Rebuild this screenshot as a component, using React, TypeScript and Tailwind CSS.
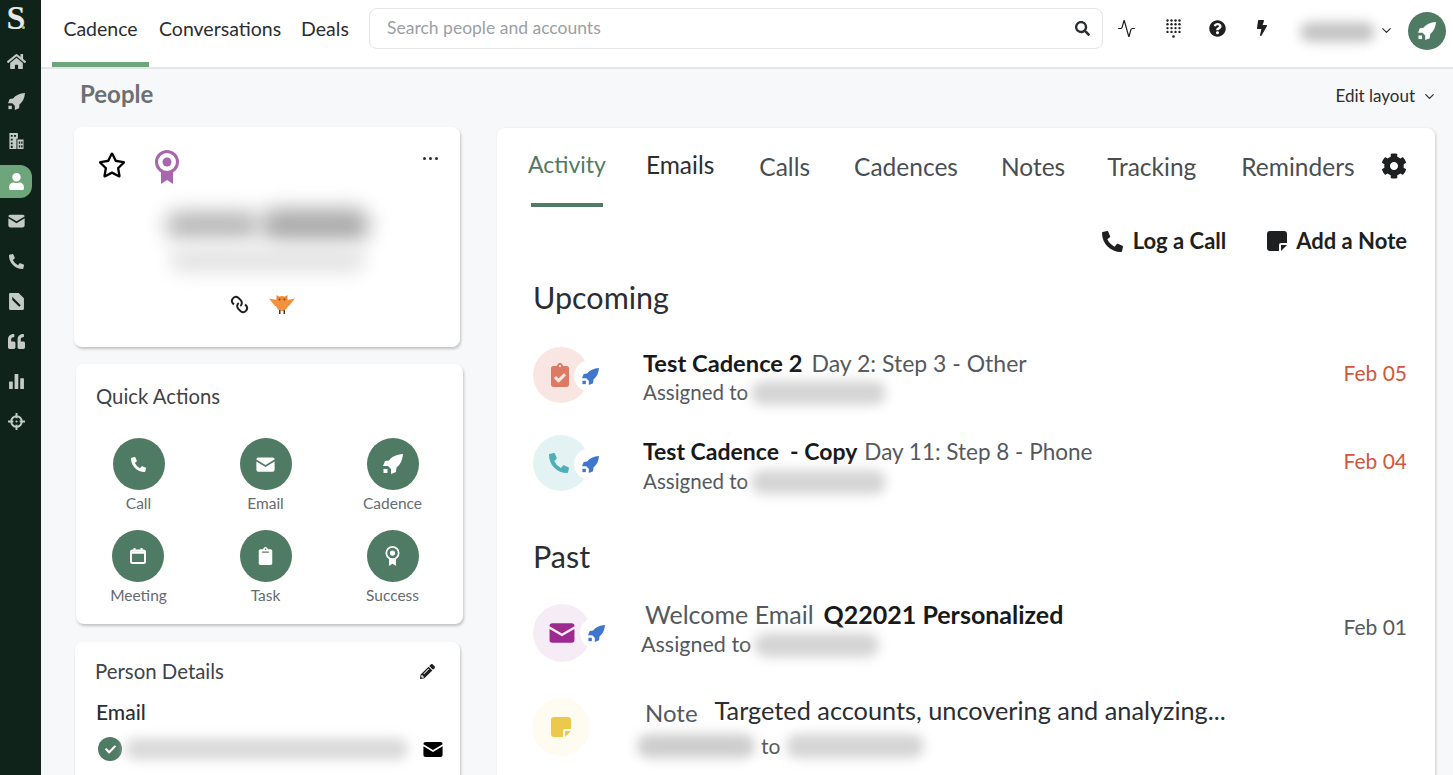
import { ReactNode } from 'react';
import { Activity, ChevronDown } from 'lucide-react';
import {
  FaBolt,
  FaCheck,
  FaClipboard,
  FaClipboardCheck,
  FaCog,
  FaHome,
  FaPencilAlt,
  FaPhoneAlt,
  FaQuestionCircle,
  FaQuoteLeft,
  FaRegStar,
  FaSearch,
  FaUser,
} from 'react-icons/fa';

function Blur({ className }: { className: string }) {
  return <div className={`rounded-full blur-[6px] ${className}`} />;
}

function Rocket({ className }: { className?: string }) {
  return (
    <svg viewBox="0 0 20 20" className={className} fill="currentColor">
      <path d="M20 0C13.500.5 9 2.500 6 6.500L2 7 0 12h5l3 3v5l5-2 .5-4.500C17.500 10.500 19.500 6 20 0z" />
      <path d="M.5 15h4v4h-4z" />
    </svg>
  );
}

function Mail({ className }: { className?: string }) {
  return (
    <svg viewBox="0 0 24 18" className={className} fill="currentColor">
      <path d="M3 0h18a2.500 2.500 0 0 1 2.500 2.500v.3L12 9.500.5 2.800v-.3A2.500 2.500 0 0 1 3 0z" />
      <path d="M.5 5.200L12 12 23.500 5.200V15.500A2.500 2.500 0 0 1 21 18H3a2.500 2.500 0 0 1-2.500-2.500z" />
    </svg>
  );
}

function Building({ className }: { className?: string }) {
  return (
    <svg viewBox="0 0 16 17" className={className} fill="currentColor">
      <path d="M1 0h9v6H8.500v11H1zM2.500 2v2h2V2zm3.500 0v2h2V2zM2.500 6v2h2V6zm0 4v2h2v-2zm0 3.500V16h2v-2.500z" fillRule="evenodd" />
      <path d="M9.500 7H16v10H9.500zM11 9v2.500h1.500V9zm2.500 0v2.500H15V9zM11 13v2.500h1.500V13zm2.500 0v2.500H15V13z" fillRule="evenodd" />
    </svg>
  );
}

function Target({ className }: { className?: string }) {
  return (
    <svg viewBox="0 0 16 16" className={className} fill="none" stroke="currentColor">
      <circle cx="8" cy="8" r="5" strokeWidth="1.800" />
      <path d="M8 0v5M8 11v5M0 8h5M11 8h5" strokeWidth="1.800" />
      <circle cx="8" cy="8" r="1" fill="currentColor" stroke="none" />
    </svg>
  );
}

function Bars({ className }: { className?: string }) {
  return (
    <svg viewBox="0 0 16 16" className={className} fill="currentColor">
      <rect x="1" y="8" width="3.500" height="7" rx="0.500" />
      <rect x="6.200" y="1" width="3.500" height="14" rx="0.500" />
      <rect x="11.500" y="5" width="3.500" height="10" rx="0.500" />
    </svg>
  );
}

function Calendar({ className }: { className?: string }) {
  return (
    <svg viewBox="0 0 16 16" className={className} fill="none" stroke="currentColor">
      <rect x="1" y="2.500" width="14" height="12.500" rx="1.500" strokeWidth="2" />
      <path d="M1 4.500h14" strokeWidth="2.500" />
      <path d="M4.500 0v3M11.500 0v3" strokeWidth="2" />
    </svg>
  );
}

function NoteDoc({ className }: { className?: string }) {
  return (
    <svg viewBox="0 0 14 16" className={className} fill="currentColor">
      <path d="M1 0h8l5 5v9.500a1.500 1.500 0 0 1-1.500 1.500h-11A1.500 1.500 0 0 1 0 14.500V1a1 1 0 0 1 1-1zm2 3.500v3L9.500 13l1.500-1.500z" fillRule="evenodd" />
    </svg>
  );
}

function StickyNote({ className }: { className?: string }) {
  return (
    <svg viewBox="0 0 20 20" className={className} fill="currentColor">
      <path d="M3 0h14a3 3 0 0 1 3 3v9h-6a2 2 0 0 0-2 2v6H3a3 3 0 0 1-3-3V3a3 3 0 0 1 3-3z" />
      <path d="M14 14h6l-6 6z" />
    </svg>
  );
}

function Ribbon({ className, hole }: { className?: string; hole: string }) {
  return (
    <svg viewBox="0 0 24 34" className={className}>
      <path d="M6 16v18l6-4 6 4V16z" fill="currentColor" />
      <circle cx="12" cy="12" r="10.500" fill={hole} stroke="currentColor" strokeWidth="3" />
      <circle cx="12" cy="12" r="4.500" fill="currentColor" />
    </svg>
  );
}

function Dialpad({ className }: { className?: string }) {
  const dots = [];
  for (let r = 0; r < 4; r++) {
    for (let c = 0; c < 4; c++) {
      dots.push(<circle key={`${r}-${c}`} cx={1.500 + c * 4} cy={1.500 + r * 3.800} r="1.200" />);
    }
  }
  return (
    <svg viewBox="0 0 15 19" className={className} fill="currentColor">
      {dots}
      <circle cx="7.500" cy="17.500" r="1.300" />
    </svg>
  );
}

function Owl() {
  return (
    <svg viewBox="0 0 26 20" className="h-5 w-[26px]">
      <path d="M0 4.500l8 1.500h10l8-1.500-6 7.500h-14z" fill="#f4913c" />
      <ellipse cx="13" cy="9.500" rx="6.500" ry="7.500" fill="#f4913c" />
      <path d="M7.500 1l3 2h5l3-2v5h-11z" fill="#ee8a33" />
      <circle cx="10.500" cy="5.500" r="1" fill="#7a4a1c" />
      <circle cx="15.500" cy="5.500" r="1" fill="#7a4a1c" />
      <path d="M10 16h1.500v4H10zM14.500 16H16v4h-1.500z" fill="#4a3a2a" />
    </svg>
  );
}

function NavIcon({ children, active }: { children: ReactNode; active?: boolean }) {
  return (
    <div className="flex h-10 w-full items-center">
      <div
        className={`flex h-[33px] w-[32px] items-center justify-center rounded-r-xl ${
          active ? 'bg-[#6fa57b] text-white' : 'text-[#c4cbc7]'
        }`}
      >
        {children}
      </div>
    </div>
  );
}

function QuickAction({ icon, label }: { icon: ReactNode; label: string }) {
  return (
    <div className="flex flex-col items-center">
      <div className="flex h-[52px] w-[52px] items-center justify-center rounded-full bg-[#4f7a64] text-white">
        {icon}
      </div>
      <div className="mt-[3px] text-[15.500px] leading-[20px] text-[#666b70]">{label}</div>
    </div>
  );
}

function TimelineIcon({
  className,
  children,
  rocket,
}: {
  className: string;
  children: ReactNode;
  rocket?: string;
}) {
  return (
    <div className={`relative flex shrink-0 items-center justify-center rounded-full ${className}`}>
      {children}
      {rocket && (
        <div className={`absolute top-[13px] flex h-[32px] w-[32px] items-center justify-center rounded-full bg-white text-[#3f74cf] ${rocket}`}>
          <Rocket className="h-[17px] w-[17px]" />
        </div>
      )}
    </div>
  );
}

const tabs: [string, string][] = [
  ['Emails', 'ml-[40px] mt-[22px] text-[#2b2e31]'],
  ['Calls', 'ml-[45px] mt-[24px]'],
  ['Cadences', 'ml-[44px] mt-[24px]'],
  ['Notes', 'ml-[43px] mt-[24px]'],
  ['Tracking', 'ml-[42px] mt-[24px]'],
  ['Reminders', 'ml-[45px] mt-[24px]'],
];

export default function App() {
  return (
    <div className="flex h-[775px] w-[1453px] overflow-hidden bg-[#f7f8fa] font-['Lato','Liberation_Sans',sans-serif] text-[#2b2e31]">
      <aside className="flex w-[41px] shrink-0 flex-col bg-[#10231a]">
        <div className="relative h-[41px] w-[32px] text-center font-['Liberation_Serif',serif] text-[34px] font-bold leading-[36px] text-[#e6e9e7]">
          S
          <span className="absolute left-[22px] top-[26px] h-[3px] w-[3px] rounded-full bg-[#9ccb5a]" />
        </div>
        <NavIcon><FaHome className="h-[19px] w-[19px]" /></NavIcon>
        <NavIcon><Rocket className="h-[17px] w-[17px]" /></NavIcon>
        <NavIcon><Building className="h-[16px] w-[16px]" /></NavIcon>
        <NavIcon active><FaUser className="h-[17px] w-[17px]" /></NavIcon>
        <NavIcon><Mail className="h-[14px] w-[17px]" /></NavIcon>
        <NavIcon><FaPhoneAlt className="h-[15px] w-[15px]" /></NavIcon>
        <NavIcon><NoteDoc className="h-[17px] w-[15px]" /></NavIcon>
        <NavIcon><FaQuoteLeft className="h-[17px] w-[17px]" /></NavIcon>
        <NavIcon><Bars className="h-[17px] w-[17px]" /></NavIcon>
        <NavIcon><Target className="h-[17px] w-[17px]" /></NavIcon>
      </aside>

      <div className="flex min-w-0 flex-1 flex-col">
        <header className="flex h-[69px] shrink-0 border-b-2 border-[#e3e6e9] bg-white">
          <nav className="flex text-[19.500px] leading-[58px] text-[#2b2e31]">
            <div className="ml-[11px] h-[67px] w-[97px] border-b-[5px] border-[#6fa57b] text-center">Cadence</div>
            <div className="ml-[10px]">Conversations</div>
            <div className="ml-[20px] w-[49px]">Deals</div>
          </nav>
          <div className="ml-[19px] mt-[8px] flex h-[41px] w-[734px] items-center rounded-lg border border-[#e3e5e8] pl-[17px] pr-[12px] text-[17.500px] text-[#9aa0a5]">
            <span className="flex-1">Search people and accounts</span>
            <FaSearch className="h-[15px] w-[15px] text-[#2b2e31]" />
          </div>
          <div className="flex items-start text-[#1d1f21]">
            <Activity className="ml-[14px] mt-[19px] h-[19px] w-[19px]" strokeWidth={1.500} />
            <Dialpad className="ml-[30px] mt-[19px] h-[19px] w-[15px]" />
            <FaQuestionCircle className="ml-[28px] mt-[20px] h-[17px] w-[17px]" />
            <FaBolt className="ml-[29px] mt-[20px] h-[16px] w-[14px]" />
            <Blur className="ml-[31px] mt-[22px] h-[20px] w-[75px] bg-[#c4c4c4]" />
            <ChevronDown className="ml-[4px] mt-[23px] h-[15px] w-[15px] text-[#333]" />
            <div className="ml-[14px] mt-[12px] flex h-[38px] w-[38px] items-center justify-center rounded-full bg-[#4f7a64] text-white">
              <Rocket className="h-[18px] w-[18px]" />
            </div>
          </div>
        </header>

        <div className="flex h-[58px] shrink-0 items-start justify-between">
          <h1 className="ml-[39px] mt-[10px] text-[24px] font-bold leading-[30px] text-[#6b7074]">People</h1>
          <div className="mr-[16px] mt-[17px] flex items-center text-[17px] leading-[20px] text-[#2b2e31]">
            Edit layout
            <ChevronDown className="ml-[7px] h-[15px] w-[15px] text-[#333]" />
          </div>
        </div>

        <div className="flex min-h-0 flex-1 items-start">
          <div className="ml-[33px] flex w-[390px] flex-col">
            <section className="h-[220px] w-[386px] rounded-lg bg-white shadow-[1px_2px_3px_rgba(0,0,0,0.22)]">
              <div className="flex items-start pl-[24px] pt-[24px]">
                <FaRegStar className="h-[28px] w-[28px] text-black" />
                <Ribbon className="ml-[29px] mt-[-1px] h-[34px] w-[24px] text-[#a866ad]" hole="#ffffff" />
                <div className="ml-auto mr-[22px] mt-[6px] flex gap-[3px]">
                  <span className="h-[3px] w-[3px] rounded-full bg-[#2b2e31]" />
                  <span className="h-[3px] w-[3px] rounded-full bg-[#2b2e31]" />
                  <span className="h-[3px] w-[3px] rounded-full bg-[#2b2e31]" />
                </div>
              </div>
              <div className="mt-[20px] flex flex-col items-center">
                <div className="flex h-[42px] w-[205px] items-center">
                  <div className="h-[28px] w-[95px] rounded-full bg-[#b8b8b8] blur-[10px]" />
                  <div className="h-[34px] w-[110px] rounded-full bg-[#acacac] blur-[10px]" />
                </div>
                <div className="mt-[1px] h-[26px] w-[195px] rounded-full bg-[#e4e4e4] blur-[9px]" />
              </div>
              <div className="mt-[21px] flex items-center justify-center gap-[20px] pr-[10px]">
                <svg viewBox="0 0 24 24" className="h-[19px] w-[19px] text-[#1d1f21]" fill="none" stroke="currentColor" strokeWidth="2.500">
                  <path d="M10 13a5 5 0 0 0 7.500.500l3-3a5 5 0 0 0-7-7l-1.500 1.500" transform="rotate(90 12 12)" />
                  <path d="M14 11a5 5 0 0 0-7.500-.500l-3 3a5 5 0 0 0 7 7l1.500-1.500" transform="rotate(90 12 12)" />
                </svg>
                <Owl />
              </div>
            </section>

            <section className="ml-[2px] mt-[17px] h-[260px] w-[387px] rounded-lg bg-white pt-[20px] shadow-[1px_2px_3px_rgba(0,0,0,0.22)]">
              <h2 className="ml-[20px] text-[20.300px] leading-[24px] text-[#3f4347]">Quick Actions</h2>
              <div className="ml-[-1px] mt-[30px] grid grid-cols-[127px_127px_127px] justify-items-center gap-y-[17px]">
                <QuickAction label="Call" icon={<FaPhoneAlt className="h-[15px] w-[15px]" />} />
                <QuickAction label="Email" icon={<Mail className="h-[15px] w-[19px]" />} />
                <QuickAction label="Cadence" icon={<Rocket className="h-[20px] w-[20px]" />} />
                <QuickAction label="Meeting" icon={<Calendar className="h-[16px] w-[16px]" />} />
                <QuickAction label="Task" icon={<FaClipboard className="h-[18px] w-[15px]" />} />
                <QuickAction label="Success" icon={<Ribbon className="h-[20px] w-[15px] text-white" hole="#4f7a64" />} />
              </div>
            </section>

            <section className="ml-[1px] mt-[18px] h-[200px] w-[385px] rounded-lg bg-white pl-[20px] pr-[18px] pt-[17px] shadow-[1px_2px_3px_rgba(0,0,0,0.22)]">
              <div className="flex items-center justify-between">
                <h2 className="text-[20.400px] leading-[24px] text-[#3f4347]">Person Details</h2>
                <FaPencilAlt className="mr-[7px] h-[15px] w-[15px] text-[#1d1f21]" />
              </div>
              <div className="ml-[1px] mt-[17px] text-[21px] font-medium leading-[24px] text-[#2b2e31]">Email</div>
              <div className="mt-[13px] flex items-center">
                <div className="ml-[3px] flex h-[24px] w-[24px] items-center justify-center rounded-full bg-[#4f7a64] text-white">
                  <FaCheck className="h-[11px] w-[11px]" />
                </div>
                <Blur className="ml-[3px] h-[22px] w-[283px] bg-[#dadada]" />
                <Mail className="ml-auto mr-[-1px] h-[15px] w-[20px] text-black" />
              </div>
            </section>
          </div>

          <main className="ml-[33px] mt-[1px] h-[660px] w-[938px] shrink-0 rounded-lg bg-white shadow-[1px_1px_3px_rgba(0,0,0,0.18)]">
            <div className="flex h-[80px] items-start pl-[31px] text-[24.500px] leading-[30px] text-[#4a4e52]">
              <div className="mt-[21px] h-[58px] text-[23px] text-[#4f7a64]">
                Activity
                <div className="ml-[3px] mt-[24px] h-[4px] w-[72px] bg-[#4f7a64]" />
              </div>
              {tabs.map(([name, offset]) => (
                <div key={name} className={offset}>{name}</div>
              ))}
              <FaCog className="ml-[26px] mt-[25px] h-[26px] w-[26px] text-[#1d1f21]" />
            </div>

            <div className="mt-[19px] flex justify-end pr-[28px] text-[22px] font-bold leading-[28px] text-[#1d1f21]">
              <div className="flex items-center">
                <FaPhoneAlt className="mr-[10px] h-[21px] w-[21px]" />
                Log a Call
              </div>
              <div className="ml-[41px] flex items-center">
                <StickyNote className="mr-[9px] h-[20px] w-[20px]" />
                Add a Note
              </div>
            </div>

            <h2 className="ml-[36px] mt-[24px] text-[30.500px] leading-[36px] text-[#2b2e31]">Upcoming</h2>

            <div className="mt-[31px] flex items-start pl-[36px] pr-[28px]">
              <TimelineIcon className="mt-[1px] h-[56px] w-[56px] bg-[#f9e6e3]" rocket="left-[41px]">
                <FaClipboardCheck className="mr-[2px] h-[24px] w-[18px] text-[#dd7a64]" />
              </TimelineIcon>
              <div className="ml-[54px] mt-[3px] flex-1">
                <div className="text-[23px] leading-[29px] text-[#55595d]">
                  <b className="text-[23.700px] font-bold text-[#17191b]">Test Cadence 2</b>
                  <span className="ml-[9px]">Day 2: Step 3 - Other</span>
                </div>
                <div className="flex items-center text-[20.500px] leading-[29px] text-[#55595d]">
                  Assigned to
                  <Blur className="ml-[3px] h-[24px] w-[135px] bg-[#d4d4d4]" />
                </div>
              </div>
              <div className="mt-[14px] text-[21px] leading-[26px] text-[#d2573d]">Feb 05</div>
            </div>

            <div className="mt-[27px] flex items-start pl-[36px] pr-[28px]">
              <TimelineIcon className="mt-[1px] h-[56px] w-[56px] bg-[#e3f2f3]" rocket="left-[41px]">
                <FaPhoneAlt className="mr-[4px] h-[20px] w-[20px] text-[#4eb0b6]" />
              </TimelineIcon>
              <div className="ml-[54px] mt-[3px] flex-1">
                <div className="text-[22.500px] leading-[29px] text-[#55595d]">
                  <b className="text-[23px] font-bold text-[#17191b]">Test Cadence&nbsp; - Copy</b>
                  <span className="ml-[7px]">Day 11: Step 8 - Phone</span>
                </div>
                <div className="mt-[1px] flex items-center text-[20.500px] leading-[29px] text-[#55595d]">
                  Assigned to
                  <Blur className="ml-[3px] h-[24px] w-[135px] bg-[#d4d4d4]" />
                </div>
              </div>
              <div className="mt-[14px] text-[21px] leading-[26px] text-[#d2573d]">Feb 04</div>
            </div>

            <h2 className="ml-[36px] mt-[42px] text-[30.500px] leading-[36px] text-[#2b2e31]">Past</h2>

            <div className="mt-[25px] flex items-start pl-[36px] pr-[28px]">
              <TimelineIcon className="mt-[5px] h-[58px] w-[58px] bg-[#f6ecf6]" rocket="left-[47px]">
                <Mail className="mr-[1px] h-[20px] w-[26px] text-[#9c2a90]" />
              </TimelineIcon>
              <div className="ml-[50px] mt-[1px] flex-1">
                <div className="ml-[4px] text-[25px] leading-[29px] text-[#55595d]">
                  Welcome Email
                  <b className="ml-[10px] font-bold text-[#17191b]">Q22021 Personalized</b>
                </div>
                <div className="mt-[1px] flex items-center text-[21.500px] leading-[29px] text-[#55595d]">
                  Assigned to
                  <Blur className="ml-[3px] h-[24px] w-[125px] bg-[#d4d4d4]" />
                </div>
              </div>
              <div className="mt-[15px] text-[21px] leading-[26px] text-[#55595d]">Feb 01</div>
            </div>

            <div className="mt-[34px] flex items-start pl-[35px] pr-[28px]">
              <TimelineIcon className="mt-[2px] h-[58px] w-[58px] bg-[#fefcf0]">
                <StickyNote className="h-[20px] w-[20px] text-[#ecc94b]" />
              </TimelineIcon>
              <div className="ml-[47px] flex-1">
                <div className="ml-[8px] flex items-start leading-[29px] text-[#55595d]">
                  <span className="mt-[2px] text-[24px]">Note</span>
                  <span className="ml-[17px] text-[25.300px] text-[#2b2e31]">Targeted accounts, uncovering and analyzing...</span>
                </div>
                <div className="mt-[6px] flex items-center text-[21px] leading-[26px] text-[#55595d]">
                  <Blur className="h-[24px] w-[118px] bg-[#cdcdcd]" />
                  <span className="ml-[6px]">to</span>
                  <Blur className="ml-[6px] h-[24px] w-[138px] bg-[#d4d4d4]" />
                </div>
              </div>
            </div>
          </main>
        </div>
      </div>
    </div>
  );
}
